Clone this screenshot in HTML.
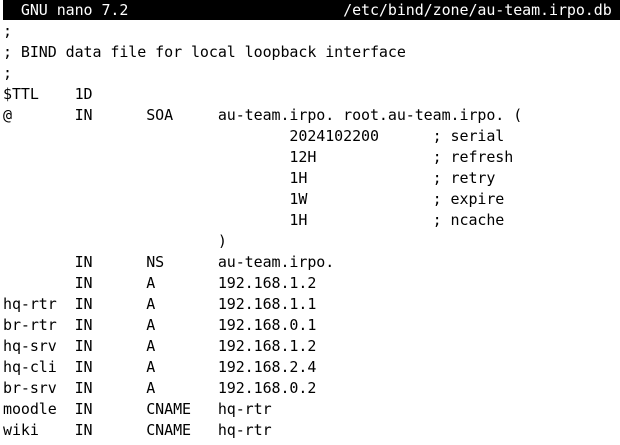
<!DOCTYPE html>
<html><head><style>
body{margin:0;background:#fff;width:620px;height:445px;overflow:hidden;}
pre{margin:0;position:absolute;left:3px;top:0px;font-family:"DejaVu Sans Mono",monospace;font-size:15px;line-height:21px;color:#000;letter-spacing:-0.08px;}
.bar{position:absolute;left:3px;top:0;width:617px;height:20px;background:#000;}
.h{color:#fff;}
</style></head><body>
<div class="bar"></div>
<pre><span class="h">  GNU nano 7.2                        /etc/bind/zone/au-team.irpo.db</span>
;
; BIND data file for local loopback interface
;
$TTL    1D
@       IN      SOA     au-team.irpo. root.au-team.irpo. (
                                2024102200      ; serial
                                12H             ; refresh
                                1H              ; retry
                                1W              ; expire
                                1H              ; ncache
                        )
        IN      NS      au-team.irpo.
        IN      A       192.168.1.2
hq-rtr  IN      A       192.168.1.1
br-rtr  IN      A       192.168.0.1
hq-srv  IN      A       192.168.1.2
hq-cli  IN      A       192.168.2.4
br-srv  IN      A       192.168.0.2
moodle  IN      CNAME   hq-rtr
wiki    IN      CNAME   hq-rtr</pre>
</body></html>
